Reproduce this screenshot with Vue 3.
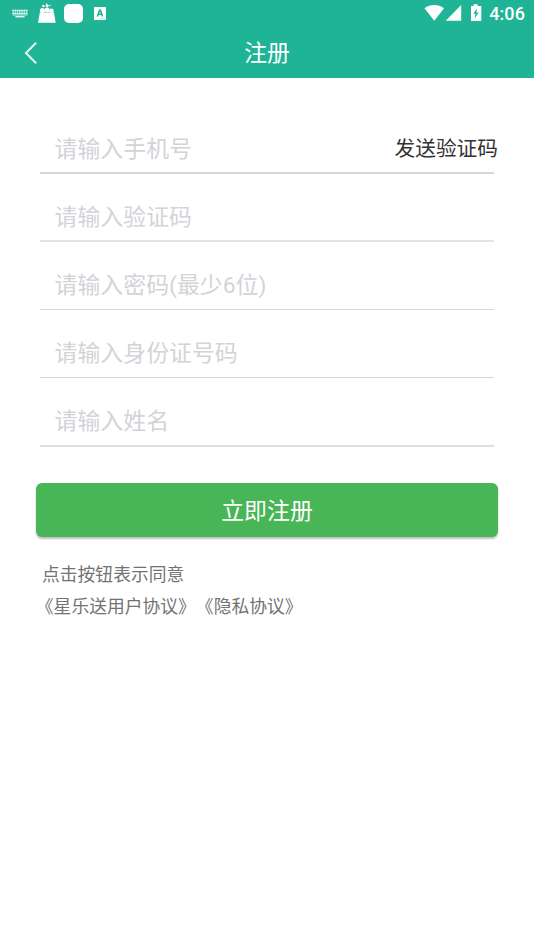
<script setup>
import { ref } from 'vue'

const fields = ref([
  { key: 'phone', label: '请输入手机号', action: '发送验证码' },
  { key: 'code', label: '请输入验证码' },
  { key: 'password', label: '请输入密码(最少6位)' },
  { key: 'identity', label: '请输入身份证号码' },
  { key: 'name', label: '请输入姓名' },
])
</script>

<template>
  <main class="screen">
    <header class="header">
      <div class="status">
        <svg class="notifications" width="120" height="27" viewBox="0 0 120 27" fill="#fff">
          <path d="M12.4 10.6H28M12.4 13.3H28" fill="none" stroke="#fff" stroke-width="1.7" stroke-dasharray="1.7 .5" />
          <path d="M12.8 15h14.6" fill="none" stroke="#fff" stroke-width="1" opacity=".7" />
          <path d="M15.5 16.7h9" fill="none" stroke="#fff" stroke-width="1.3" />
          <path d="M39.8 12.4h14.1l1.8 10.4H38z" />
          <circle cx="42.4" cy="10.6" r="2.5" />
          <circle cx="47.1" cy="10" r="2.5" />
          <circle cx="51.4" cy="10.8" r="2.4" />
          <circle cx="43.4" cy="6" r="1.3" />
          <circle cx="47.2" cy="5.8" r="1.5" />
          <circle cx="50.2" cy="5.4" r=".7" />
          <circle cx="46.4" cy="4" r=".7" />
          <rect x="64" y="4" width="19" height="19" rx="5" />
          <rect x="94" y="7" width="12" height="13" rx=".8" />
          <path d="M97.4 16.4l2.1-6h1l2.1 6M98.3 14.3h3.4" fill="none" stroke="#1eb495" stroke-width="1.6" />
          <path d="M100.5 18.6h4.5" stroke="#1eb495" stroke-width=".6" stroke-dasharray="1 .6" />
        </svg>
        <div class="system">
          <svg width="60" height="27" viewBox="0 0 60 27" fill="#fff">
            <path d="M.5 8.3C6 4 14.4 4 20 8.3L10.3 20.8z" />
            <path d="M37.2 5v15.8H21.7z" />
            <path d="M47 6h2.6V4.3h4V6h3.7v15H47z" />
            <path d="M53 8.3l-3.7 5.5h2.1l-.8 4.8 4-6.2h-2.2z" fill="#1eb495" />
          </svg>
          <time class="clock">4:06</time>
        </div>
      </div>
      <nav class="nav">
        <svg class="back" width="14" height="24" viewBox="0 0 14 24" fill="none" stroke="#d8f2ec" stroke-width="2.2">
          <path d="M12.1 1.8L2 12l10.1 10.2" />
        </svg>
        <h1 class="title">注册</h1>
      </nav>
    </header>
    <form class="form" @submit.prevent>
      <div v-for="field in fields" :key="field.key" class="field" :class="field.key">
        <span class="hint">{{ field.label }}</span>
        <span v-if="field.action" class="send">{{ field.action }}</span>
      </div>
      <button class="submit" type="submit">立即注册</button>
    </form>
    <footer class="terms">
      <p>点击按钮表示同意</p>
      <p class="links"><a>《星乐送用户协议》</a><a>《隐私协议》</a></p>
    </footer>
  </main>
</template>

<style>
body {
  background: #fff;
}
</style>

<style scoped>
.screen {
  box-sizing: border-box;
  width: 534px;
  height: 950px;
  overflow: hidden;
  background: #fff;
  font-family: Roboto, "Noto Sans CJK SC", sans-serif;
}
.header {
  height: 78px;
  background: #1eb495;
  color: #fff;
}
.status {
  display: flex;
  justify-content: space-between;
  height: 27px;
}
.system {
  display: flex;
  gap: 5px;
  padding-right: 9px;
}
.clock {
  font-size: 18px;
  font-weight: 500;
  line-height: 28px;
  letter-spacing: .1px;
}
.nav {
  display: grid;
  grid-template-columns: 60px 1fr 60px;
  align-items: center;
  height: 51px;
}
.back {
  margin-left: 24px;
}
.title {
  margin: 0;
  padding-top: 2px;
  font-size: 22.8px;
  font-weight: 400;
  line-height: 34px;
  text-align: center;
}
.form {
  padding: 28px 36px 0;
}
.field {
  display: flex;
  align-items: center;
  justify-content: space-between;
  box-sizing: border-box;
  height: 68px;
  margin: 0 4px;
  padding: 20px 0 0 14.6px;
  border-bottom: 1px solid #d6d6da;
}
.phone {
  padding-top: 21px;
  border-bottom: 2px solid #d4d4d9;
}
.code {
  padding-top: 21px;
  border-bottom: 2px solid #e4e4e5;
}
.name {
  height: 69px;
  border-bottom: 2px solid #dfdfe1;
}
.hint {
  color: #d3d3d8;
  font-size: 22.9px;
  line-height: 34px;
  white-space: nowrap;
}
.send {
  margin: -1px -4px 0 0;
  color: #333;
  font-size: 20.7px;
  line-height: 32px;
}
.submit {
  display: block;
  width: 462px;
  height: 54px;
  margin-top: 36px;
  padding: 0 0 3px;
  border: 0;
  border-radius: 6px;
  background: #48b556;
  box-shadow: 0 2px 2px rgba(0, 0, 0, .25);
  color: #fff;
  font: inherit;
  font-size: 22.9px;
}
.terms {
  padding: 22px 42px 0;
  color: #737373;
  font-size: 17.8px;
  line-height: 32px;
}
.terms p {
  margin: 0;
}
.terms .links {
  display: flex;
  margin-left: -6.2px;
  text-spacing-trim: space-all;
}
</style>
